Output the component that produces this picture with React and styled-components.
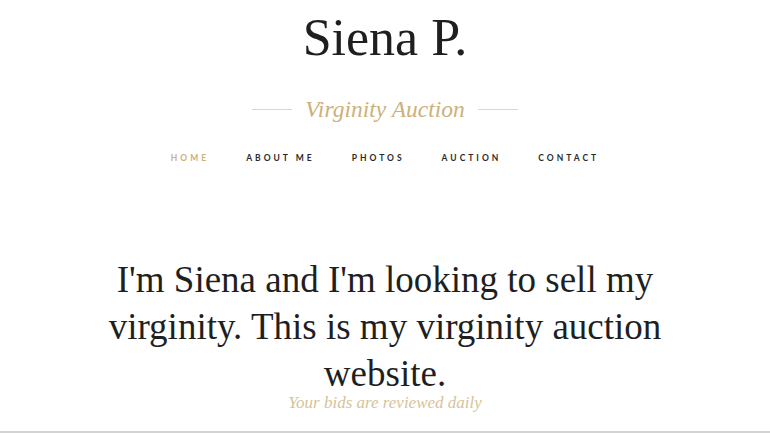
import React from "react";
import styled, { createGlobalStyle } from "styled-components";

const GlobalStyle = createGlobalStyle`
  html, body {
    margin: 0;
    padding: 0;
    background: #ffffff;
  }
  body {
    font-family: "Liberation Serif", "Times New Roman", serif;
    color: #222222;
  }
`;

const navItems = ["Home", "About Me", "Photos", "Auction", "Contact"];

const App = () => {
  return (
    <>
      <GlobalStyle />
      <Page>
        <Header>
          <Title>Siena P.</Title>
          <Tagline>
            <Rule />
            <TaglineText>Virginity Auction</TaglineText>
            <Rule />
          </Tagline>
          <Nav>
            {navItems.map((item, i) => (
              <NavLink key={item} href="#" active={i === 0 ? 1 : 0}>
                {item}
              </NavLink>
            ))}
          </Nav>
        </Header>
        <Hero>
          <Heading>
            I'm Siena and I'm looking to sell my virginity. This is my virginity
            auction website.
          </Heading>
          <Subtitle>Your bids are reviewed daily</Subtitle>
        </Hero>
      </Page>
    </>
  );
};

const Page = styled.div`
  width: 100%;
  min-height: 433px;
  display: flex;
  flex-direction: column;
`;

const Header = styled.header`
  display: flex;
  flex-direction: column;
  align-items: center;
  padding-top: 12px;
`;

const Title = styled.h1`
  margin: 0;
  font-family: "Liberation Serif", serif;
  font-weight: 400;
  font-size: 52px;
  line-height: 52px;
  color: #1f1f1f;
`;

const Tagline = styled.div`
  margin-top: 34px;
  display: flex;
  align-items: center;
  gap: 13px;
`;

const Rule = styled.span`
  display: block;
  width: 40px;
  height: 1px;
  background: #dcd6c8;
`;

const TaglineText = styled.span`
  font-style: italic;
  font-size: 23.5px;
  line-height: 23px;
  color: #cdb07a;
`;

const Nav = styled.nav`
  margin-top: 31px;
  display: flex;
  gap: 37px;
  height: 12px;
  align-items: center;
`;

const NavLink = styled.a`
  font-family: "Lato", "DejaVu Sans", sans-serif;
  font-size: 8.5px;
  font-weight: 700;
  letter-spacing: 3px;
  text-transform: uppercase;
  text-decoration: none;
  line-height: 12px;
  color: ${(p) => (p.active ? "#cdb07a" : "#2a2a2a")};
`;

const Hero = styled.section`
  flex: 1;
  display: flex;
  flex-direction: column;
  align-items: center;
  padding-top: 92px;
  border-bottom: 2px solid #d3d3d3;
  box-sizing: border-box;
  height: 282px;
`;

const Heading = styled.h2`
  margin: 0;
  max-width: 580px;
  text-align: center;
  font-weight: 400;
  font-size: 37px;
  line-height: 47px;
  color: #1f1f1f;
`;

const Subtitle = styled.p`
  margin: 0;
  font-style: italic;
  font-size: 17px;
  line-height: 12px;
  color: #d6c39a;
`;

export default App;
